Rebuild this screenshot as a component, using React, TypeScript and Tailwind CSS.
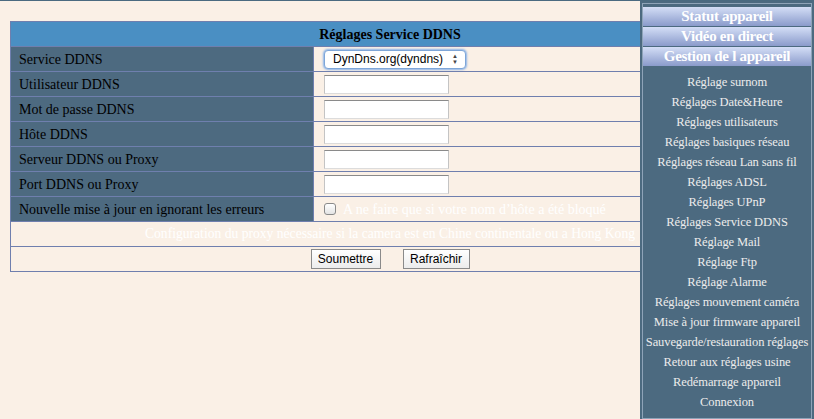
import React from 'react'

const rows = [
    'Utilisateur DDNS',
    'Mot de passe DDNS',
    'Hôte DDNS',
    'Serveur DDNS ou Proxy',
    'Port DDNS ou Proxy',
]

const links = [
    'Réglage surnom',
    'Réglages Date&Heure',
    'Réglages utilisateurs',
    'Réglages basiques réseau',
    'Réglages réseau Lan sans fil',
    'Réglages ADSL',
    'Réglages UPnP',
    'Réglages Service DDNS',
    'Réglage Mail',
    'Réglage Ftp',
    'Réglage Alarme',
    'Réglages mouvement caméra',
    'Mise à jour firmware appareil',
    'Sauvegarde/restauration réglages',
    'Retour aux réglages usine',
    'Redémarrage appareil',
    'Connexion',
]

const serif = "font-['Liberation_Serif','Times_New_Roman',serif]"
const sans = "font-['Liberation_Sans',Arial,sans-serif]"

function Cell({ children }: { children: React.ReactNode }) {
    return (
        <td className="h-[25px] border border-[#6f7fae] bg-[#faf0e6] pl-[10px] align-middle">
            {children}
        </td>
    )
}

function Label({ children }: { children: React.ReactNode }) {
    return (
        <td className="h-[25px] w-[303px] border border-[#6f7fae] bg-[#4d6a80] pl-[8px] text-[14px] text-black align-middle">
            {children}
        </td>
    )
}

export default function App() {
    return (
        <div className={`relative h-[419px] w-[814px] overflow-hidden border-t border-[#4a6a80] bg-[#faf0e6] ${serif}`}>
            <div className="pl-[10px] pt-[20px]">
                <table className="w-[760px] border-collapse border border-[#6f7fae]">
                    <tbody>
                        <tr>
                            <td colSpan={2} className="h-[25px] border border-[#6f7fae] bg-[#4a8fc3] text-center text-[14px] font-bold text-black">
                                Réglages Service DDNS
                            </td>
                        </tr>
                        <tr>
                            <Label>Service DDNS</Label>
                            <Cell>
                                <div className={`flex h-[19px] w-[142px] items-center justify-between rounded-[4px] border border-[#7ea6d8] bg-white pl-[8px] pr-[7px] text-[12px] text-black shadow-[0_0_2px_1px_#8cb4e8] ${sans}`}>
                                    <span>DynDns.org(dyndns)</span>
                                    <span className="text-[6px] leading-[6px] text-[#444]">▲<br />▼</span>
                                </div>
                            </Cell>
                        </tr>
                        {rows.map((r) => (
                            <tr key={r}>
                                <Label>{r}</Label>
                                <Cell>
                                    <div className="h-[19px] w-[125px] border border-t-[#8a8a8a] border-x-[#c4c4c4] border-b-[#dcdcdc] bg-white" />
                                </Cell>
                            </tr>
                        ))}
                        <tr>
                            <Label>Nouvelle mise à jour en ignorant les erreurs</Label>
                            <Cell>
                                <div className="flex items-center gap-[7px] text-[14px] text-white">
                                    <span className="h-[12px] w-[12px] rounded-[3px] border border-[#8a8a8a] bg-gradient-to-b from-white to-[#e4e4e4]" />
                                    <span>A ne faire que si votre nom d’hôte a été bloqué</span>
                                </div>
                            </Cell>
                        </tr>
                        <tr>
                            <td colSpan={2} className="h-[25px] border border-[#6f7fae] bg-[#faf0e6] text-center text-[13.6px] text-white">
                                Configuration du proxy nécessaire si la camera est en Chine continentale ou a Hong Kong
                            </td>
                        </tr>
                        <tr>
                            <td colSpan={2} className="h-[25px] border border-[#6f7fae] bg-[#faf0e6]">
                                <div className={`flex justify-center gap-[22px] text-[12px] text-black ${sans}`}>
                                    <button className="h-[20px] w-[70px] border border-[#8a8a8a] bg-gradient-to-b from-white to-[#ececec]">Soumettre</button>
                                    <button className="h-[20px] w-[67px] border border-[#8a8a8a] bg-gradient-to-b from-white to-[#ececec]">Rafraîchir</button>
                                </div>
                            </td>
                        </tr>
                    </tbody>
                </table>
            </div>

            <div className="absolute right-0 top-0 h-[420px] w-[174px] bg-[#4c6a80] p-[2px]">
                <div className="flex h-[416px] flex-col border border-[#8ea3b8] pt-[3px]">
                    <div className="flex flex-col gap-[1px]">
                        {['Statut appareil', 'Vidéo en direct', 'Gestion de l appareil'].map((b) => (
                            <div
                                key={b}
                                className="flex h-[19px] items-center justify-center whitespace-nowrap bg-gradient-to-b from-[#d4def6] to-[#8b9bcb] text-[15px] font-bold leading-none tracking-[-0.3px] text-white"
                            >
                                {b}
                            </div>
                        ))}
                    </div>
                    <ul className="mt-[6px] flex flex-col">
                        {links.map((l) => (
                            <li key={l} className="h-[20px] whitespace-nowrap text-center text-[12.5px] leading-[20px] tracking-[-0.1px] text-[#ececec]">
                                {l}
                            </li>
                        ))}
                    </ul>
                </div>
            </div>
        </div>
    )
}
